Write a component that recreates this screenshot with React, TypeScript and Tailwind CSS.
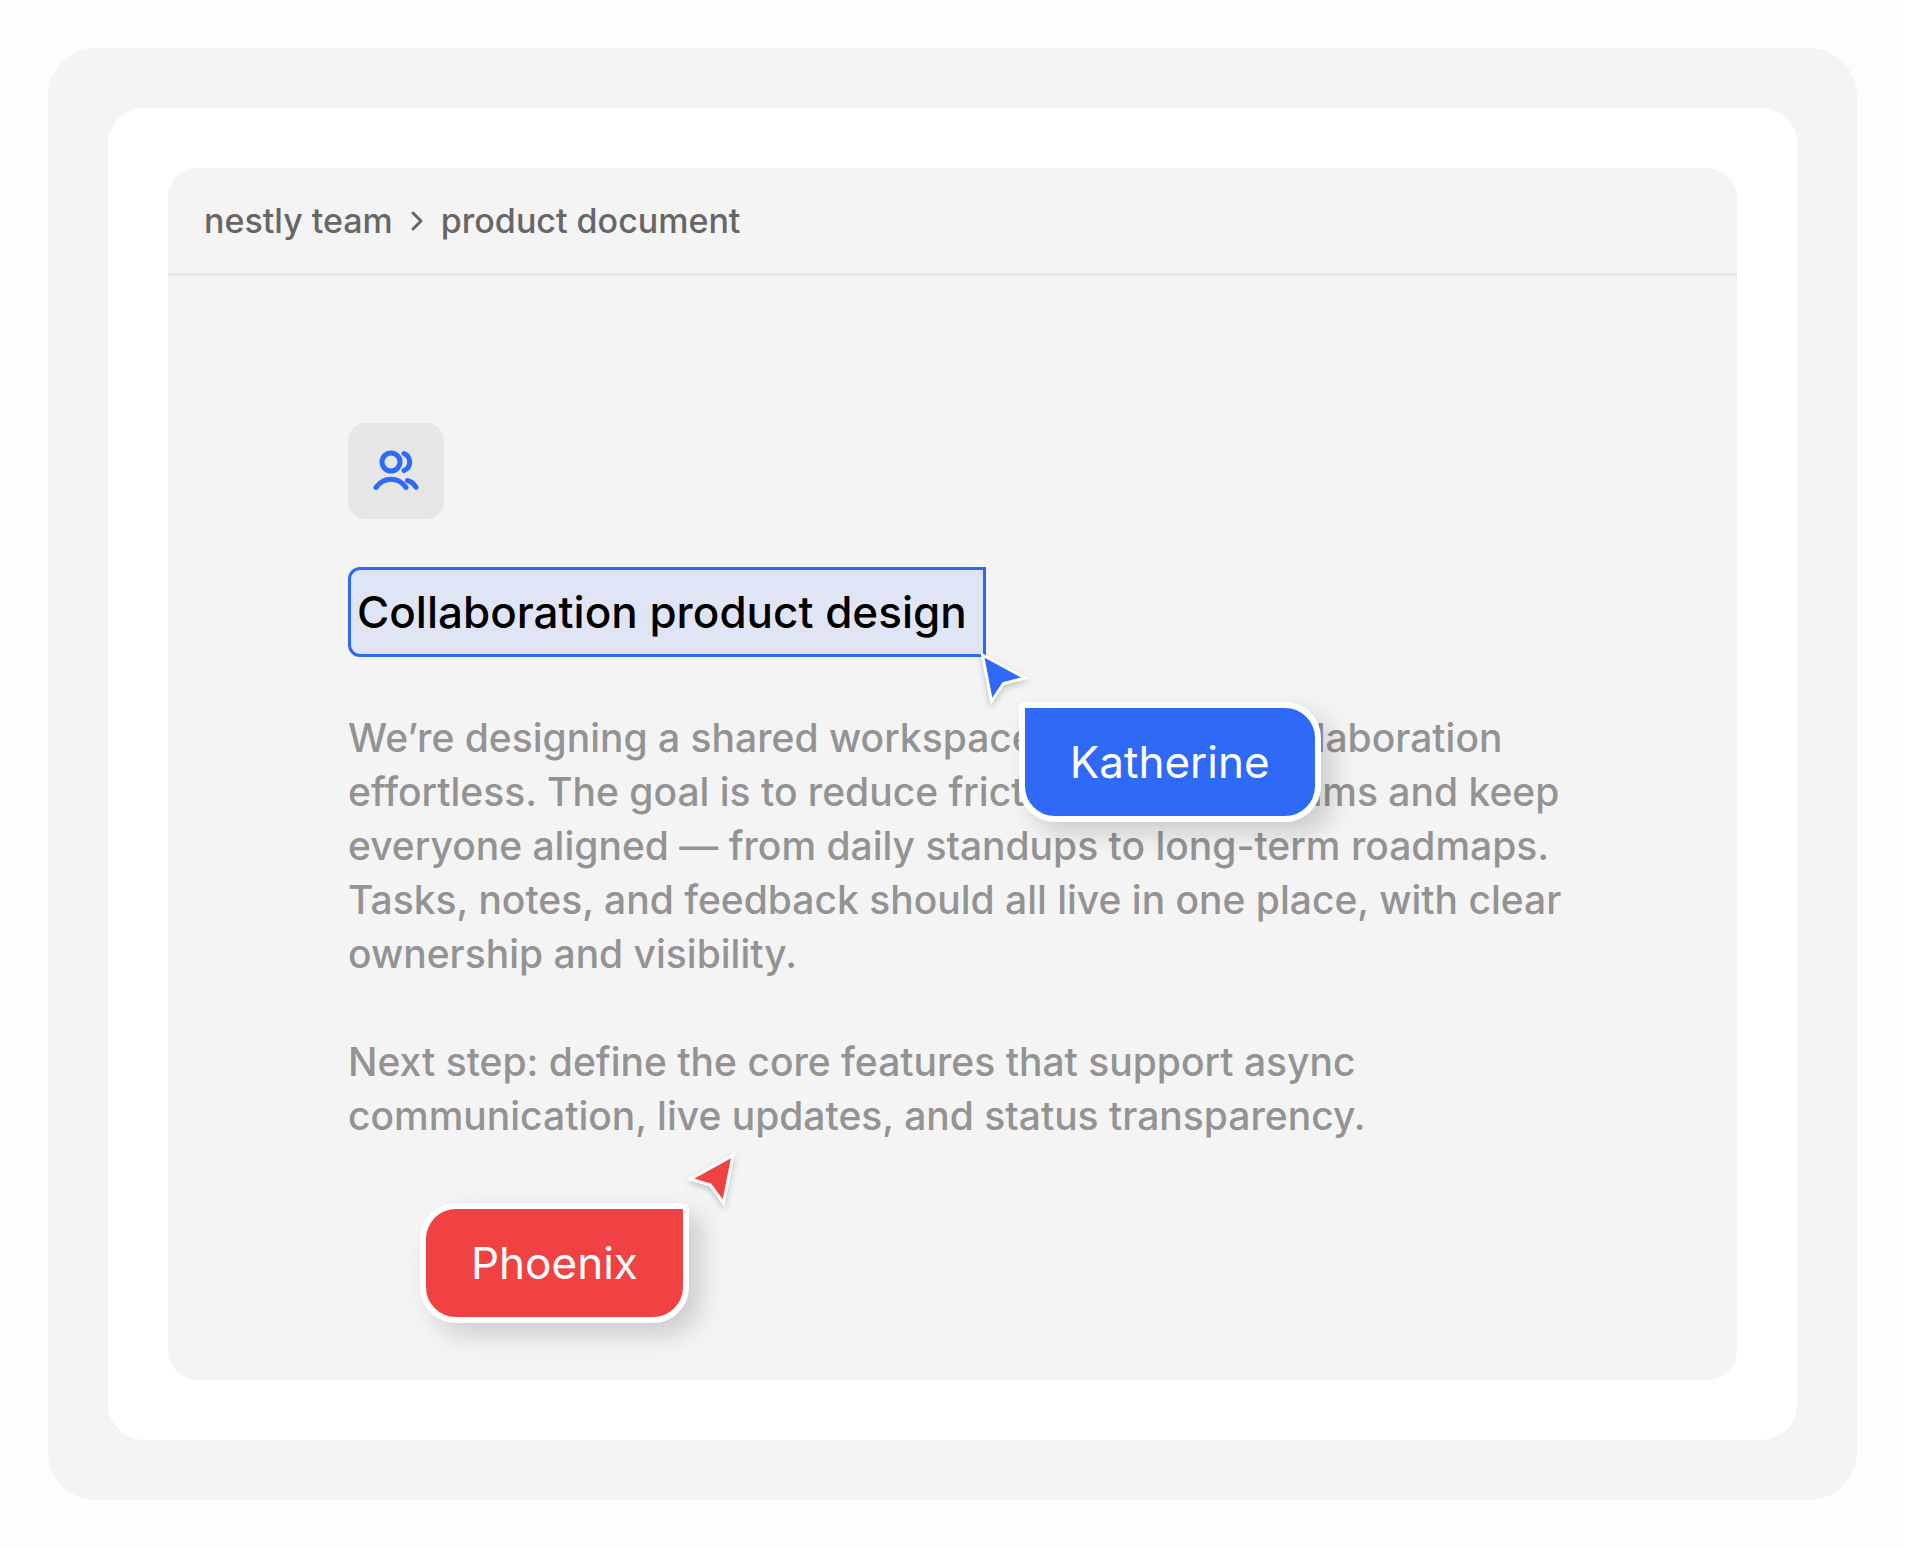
import type { ReactNode } from "react";

function TeamIcon() {
  return (
    <svg
      width="48"
      height="48"
      viewBox="0 0 48 48"
      fill="none"
      stroke="#2e69f7"
      strokeWidth="5"
      strokeLinecap="round"
      aria-hidden="true"
    >
      <circle cx="19" cy="15" r="9" />
      <path d="M32 6.500a9.200 9.200 0 0 1 0 17" />
      <path d="M4 40.500c8-11 22-11 30 0" />
      <path d="M35.500 33.500c3.500 1 6.500 3.500 8.500 6.800" />
    </svg>
  );
}

function Pointer({ color, flipped }: { color: string; flipped?: boolean }) {
  return (
    <svg
      width="54"
      height="60"
      viewBox="0 0 54 60"
      className="block overflow-visible drop-shadow-[0_3px_3px_rgba(0,0,0,0.2)]"
      aria-hidden="true"
    >
      <path
        d={
          flipped
            ? "M49 4.500L6.500 28L26.500 34L39.500 52Z"
            : "M4.500 6L47 29L25.500 34.500L13.500 52.500Z"
        }
        fill={color}
        stroke="white"
        strokeWidth="3"
      />
    </svg>
  );
}

function NameTag({ className, children }: { className: string; children: ReactNode }) {
  return (
    <div
      className={
        "flex h-[120px] w-max items-center border-6 border-white px-[45px] text-[44px] font-normal text-white shadow-[12px_12px_24px_rgba(0,0,0,0.16)] " +
        className
      }
    >
      {children}
    </div>
  );
}

export default function App() {
  return (
    <div className="min-h-screen bg-[#fdfdfd] p-12 font-['Inter',sans-serif]">
      <div className="rounded-[48px] bg-[#f4f4f4] p-[60px]">
        <div className="rounded-[36px] bg-white p-[60px]">
          <main className="rounded-[30px] bg-[#f4f4f4]">
            <nav
              aria-label="Breadcrumb"
              className="flex h-[108px] items-center gap-4 border-b-3 border-[#e6e6e6] px-9 text-[34px] font-medium text-[#666666]"
            >
              <a href="#team">nestly team</a>
              <svg
                width="16"
                height="24"
                viewBox="0 0 16 24"
                fill="none"
                stroke="currentColor"
                strokeWidth="3"
                strokeLinecap="round"
                strokeLinejoin="round"
                aria-hidden="true"
              >
                <path d="M4 4l8 8l-8 8" />
              </svg>
              <a href="#document">product document</a>
            </nav>

            <article className="pt-[147px] pr-[120px] pb-[237px] pl-[180px]">
              <div className="flex size-24 items-center justify-center rounded-[18px] bg-[#e6e6e6]">
                <TeamIcon />
              </div>

              <div className="relative mt-12 w-max">
                <h1 className="flex h-[90px] items-center rounded-l-xl border-3 border-[#2e69f7] bg-[#e0e5f5] pr-4 pl-1.5 text-[44px] font-medium text-black">
                  Collaboration product design
                </h1>
                <div className="absolute top-full left-full z-10">
                  <div className="absolute -top-2 -left-2">
                    <Pointer color="#2e69f7" />
                  </div>
                  <div className="absolute top-[45px] left-[33px]">
                    <NameTag className="rounded-[36px] rounded-tl-md bg-[#2e69f7]">Katherine</NameTag>
                  </div>
                </div>
              </div>

              <div className="relative mt-[54px] text-[39px] leading-[54px] font-medium text-[#939393]">
                <p>
                  We’re designing a shared workspace that makes collaboration
                  <br />
                  effortless. The goal is to reduce friction between teams and keep
                  <br />
                  everyone aligned — from daily standups to long-term roadmaps.
                  <br />
                  Tasks, notes, and feedback should all live in one place, with clear
                  <br />
                  ownership and visibility.
                </p>
                <p className="mt-[54px]">
                  Next step: define the core features that support async
                  <br />
                  communication, live updates, and status transparency.
                </p>
                <div className="absolute top-full left-[72px]">
                  <div className="absolute top-[60px] left-0">
                    <NameTag className="rounded-[36px] rounded-tr-md bg-[#f04242]">Phoenix</NameTag>
                  </div>
                  <div className="absolute top-2 left-[264px]">
                    <Pointer color="#f04242" flipped />
                  </div>
                </div>
              </div>
            </article>
          </main>
        </div>
      </div>
    </div>
  );
}
